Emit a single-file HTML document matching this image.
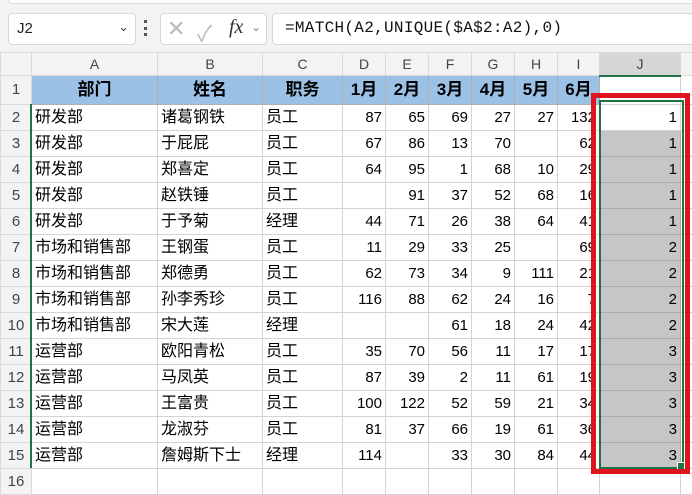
<!DOCTYPE html>
<html><head><meta charset="utf-8"><style>
body{margin:0;width:692px;height:481px;overflow:hidden;background:#fff;font-family:"Liberation Sans","Noto Sans CJK SC",sans-serif;position:relative}
.top{position:absolute;left:0;top:0;width:692px;height:52px;background:#f3f3f3}
.strip{position:absolute;left:8px;top:0;width:684px;height:3px;background:#fff;border-bottom:1px solid #ddd;border-left:1px solid #ddd;border-radius:0 0 0 4px}
.box{position:absolute;background:#fff;border:1px solid #d6d6d6;border-radius:4px;top:13px;height:30px}
table{position:absolute;left:0;top:52px;border-collapse:collapse;table-layout:fixed;width:700px}
td{border:1px solid #d4d4d4;height:25px;padding:0 3px;font-size:16px;white-space:nowrap;overflow:hidden;color:#000;box-sizing:border-box;line-height:18px}
tr.ch td{height:23px;background:#f3f3f3;color:#444;text-align:center;font-size:14px;border-color:#dadada}
tr.h td{height:29px}
tr.h td.c{background:#9bc2e6;font-weight:bold;text-align:center;font-size:17px;border-color:#b0b0b0}
tr.r td{height:26px}
td.rh{background:#f3f3f3;color:#444;text-align:center;font-size:15px;padding:0;border-color:#dadada}
td.n{text-align:right;font-size:15px}
td.j{background:#c6c6c6;text-align:right;font-size:15px;border-color:#aaa}
</style></head><body>
<div class="top"><div class="strip"></div>
<div class="box" style="left:8px;width:126px"><span style="position:absolute;left:8px;top:6px;font-size:15px;color:#222">J2</span><span style="position:absolute;right:6px;top:5px;font-size:13px;color:#444">&#8964;</span></div>
<div style="position:absolute;left:144px;top:20px;width:3px;height:16px;border-left:3px dotted #555"></div>
<div class="box" style="left:160px;width:105px"><span style="position:absolute;left:6px;top:2px;font-size:22px;color:#bbb">&#x2715;</span><span style="position:absolute;left:36px;top:2px;font-size:22px;color:#bbb">&#x2713;</span><span style="position:absolute;left:68px;top:2px;font-size:20px;font-style:italic;font-family:'Liberation Serif',serif;color:#333">fx</span><span style="position:absolute;left:90px;top:6px;font-size:12px;color:#888">&#8964;</span></div>
<div class="box" style="left:272px;width:430px"><span style="position:absolute;left:12px;top:5px;font-size:16px;font-family:'Liberation Mono',monospace;color:#111;letter-spacing:0.3px">=MATCH(A2,UNIQUE($A$2:A2),0)</span></div>
</div>
<table>
<colgroup><col style="width:31px"><col style="width:126px"><col style="width:105px"><col style="width:80px"><col style="width:43px"><col style="width:43px"><col style="width:43px"><col style="width:43px"><col style="width:43px"><col style="width:42px"><col style="width:81px"><col style="width:20px"></colgroup>
<tr class="ch"><td></td><td>A</td><td>B</td><td>C</td><td>D</td><td>E</td><td>F</td><td>G</td><td>H</td><td>I</td><td style="background:#d6d6d6;border-bottom:2px solid #217346">J</td><td></td></tr>
<tr class="h"><td class="rh">1</td><td class="c">部门</td><td class="c">姓名</td><td class="c">职务</td><td class="c">1月</td><td class="c">2月</td><td class="c">3月</td><td class="c">4月</td><td class="c">5月</td><td class="c">6月</td><td></td><td></td></tr>
<tr class="r"><td class="rh">2</td><td>研发部</td><td>诸葛钢铁</td><td>员工</td><td class="n">87</td><td class="n">65</td><td class="n">69</td><td class="n">27</td><td class="n">27</td><td class="n">132</td><td class="n" style="background:#fff">1</td><td></td></tr>
<tr class="r"><td class="rh">3</td><td>研发部</td><td>于屁屁</td><td>员工</td><td class="n">67</td><td class="n">86</td><td class="n">13</td><td class="n">70</td><td class="n"></td><td class="n">62</td><td class="j">1</td><td></td></tr>
<tr class="r"><td class="rh">4</td><td>研发部</td><td>郑喜定</td><td>员工</td><td class="n">64</td><td class="n">95</td><td class="n">1</td><td class="n">68</td><td class="n">10</td><td class="n">29</td><td class="j">1</td><td></td></tr>
<tr class="r"><td class="rh">5</td><td>研发部</td><td>赵铁锤</td><td>员工</td><td class="n"></td><td class="n">91</td><td class="n">37</td><td class="n">52</td><td class="n">68</td><td class="n">16</td><td class="j">1</td><td></td></tr>
<tr class="r"><td class="rh">6</td><td>研发部</td><td>于予菊</td><td>经理</td><td class="n">44</td><td class="n">71</td><td class="n">26</td><td class="n">38</td><td class="n">64</td><td class="n">41</td><td class="j">1</td><td></td></tr>
<tr class="r"><td class="rh">7</td><td>市场和销售部</td><td>王钢蛋</td><td>员工</td><td class="n">11</td><td class="n">29</td><td class="n">33</td><td class="n">25</td><td class="n"></td><td class="n">69</td><td class="j">2</td><td></td></tr>
<tr class="r"><td class="rh">8</td><td>市场和销售部</td><td>郑德勇</td><td>员工</td><td class="n">62</td><td class="n">73</td><td class="n">34</td><td class="n">9</td><td class="n">111</td><td class="n">21</td><td class="j">2</td><td></td></tr>
<tr class="r"><td class="rh">9</td><td>市场和销售部</td><td>孙李秀珍</td><td>员工</td><td class="n">116</td><td class="n">88</td><td class="n">62</td><td class="n">24</td><td class="n">16</td><td class="n">7</td><td class="j">2</td><td></td></tr>
<tr class="r"><td class="rh">10</td><td>市场和销售部</td><td>宋大莲</td><td>经理</td><td class="n"></td><td class="n"></td><td class="n">61</td><td class="n">18</td><td class="n">24</td><td class="n">42</td><td class="j">2</td><td></td></tr>
<tr class="r"><td class="rh">11</td><td>运营部</td><td>欧阳青松</td><td>员工</td><td class="n">35</td><td class="n">70</td><td class="n">56</td><td class="n">11</td><td class="n">17</td><td class="n">17</td><td class="j">3</td><td></td></tr>
<tr class="r"><td class="rh">12</td><td>运营部</td><td>马凤英</td><td>员工</td><td class="n">87</td><td class="n">39</td><td class="n">2</td><td class="n">11</td><td class="n">61</td><td class="n">19</td><td class="j">3</td><td></td></tr>
<tr class="r"><td class="rh">13</td><td>运营部</td><td>王富贵</td><td>员工</td><td class="n">100</td><td class="n">122</td><td class="n">52</td><td class="n">59</td><td class="n">21</td><td class="n">34</td><td class="j">3</td><td></td></tr>
<tr class="r"><td class="rh">14</td><td>运营部</td><td>龙淑芬</td><td>员工</td><td class="n">81</td><td class="n">37</td><td class="n">66</td><td class="n">19</td><td class="n">61</td><td class="n">36</td><td class="j">3</td><td></td></tr>
<tr class="r"><td class="rh">15</td><td>运营部</td><td>詹姆斯下士</td><td>经理</td><td class="n">114</td><td class="n"></td><td class="n">33</td><td class="n">30</td><td class="n">84</td><td class="n">44</td><td class="j">3</td><td></td></tr>
<tr class="r"><td class="rh">16</td><td></td><td></td><td></td><td></td><td></td><td></td><td></td><td></td><td></td><td></td><td></td></tr>
</table>
<div style="position:absolute;left:30px;top:104px;width:2px;height:364px;background:#217346"></div>
<div style="position:absolute;left:599px;top:100px;width:81px;height:365px;border:2px solid #217346"></div>
<div style="position:absolute;left:677px;top:462px;width:6px;height:6px;background:#217346;border:1px solid #fff"></div>
<div style="position:absolute;left:591px;top:93px;width:89px;height:371px;border:5px solid #e0141e"></div>
</body></html>
